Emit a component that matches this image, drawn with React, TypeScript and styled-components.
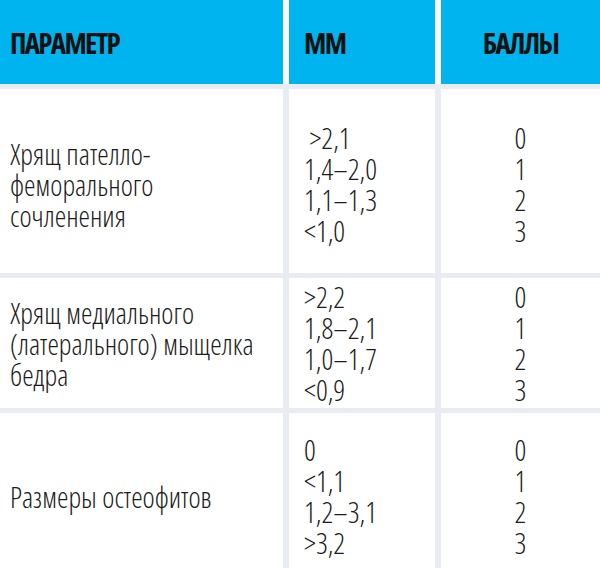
import React from "react";
import styled, { createGlobalStyle } from "styled-components";

const GlobalStyle = createGlobalStyle`
  html, body {
    margin: 0;
    padding: 0;
    background: #ffffff;
    overflow: hidden;
  }
  body {
    font-family: "Open Sans", "DejaVu Sans Condensed", sans-serif;
  }
`;

const COLS = "283px 146px 1fr";

const Page = styled.div`
  width: 600px;
  height: 568px;
  overflow: hidden;
  display: flex;
  flex-direction: column;
`;

const HeaderRow = styled.div`
  display: grid;
  grid-template-columns: ${COLS};
  column-gap: 6px;
  height: 84px;
  background: #ffffff;
  flex: none;
`;

const HeadCell = styled.div<{ $center?: boolean }>`
  background: #00b5ef;
  display: flex;
  align-items: center;
  justify-content: ${(p) => (p.$center ? "center" : "flex-start")};
  padding: 0 ${(p) => (p.$center ? "0" : "15px")};
  font-family: "Open Sans", sans-serif;
  font-stretch: 75%;
  font-weight: 750;
  font-size: 29px;
  letter-spacing: -1.7px;
  color: #111111;
  &:first-child {
    padding-left: 10px;
  }
`;

const Body = styled.div`
  display: grid;
  grid-template-columns: ${COLS};
  column-gap: 6px;
  row-gap: 5px;
  padding-top: 5px;
  background: #e9ecf3;
  flex: none;
`;

const Cell = styled.div<{ $h: number; $shift: number; $center?: boolean; $padLeft: number }>`
  background: #ffffff;
  height: ${(p) => p.$h}px;
  box-sizing: border-box;
  padding-top: ${(p) => p.$shift}px;
  padding-left: ${(p) => p.$padLeft}px;
  display: flex;
  flex-direction: column;
  justify-content: center;
  align-items: ${(p) => (p.$center ? "center" : "flex-start")};
  font-family: "Open Sans", sans-serif;
  font-stretch: 75%;
  font-weight: 300;
  font-size: 29px;
  line-height: 31px;
  color: #1c1c1c;
`;

const Line = styled.div`
  white-space: pre;
`;

type Row = {
  param: string[];
  mm: string[];
  score: string[];
  h: number;
  shift: number;
};

const rows: Row[] = [
  {
    param: ["Хрящ пателло-", "феморального", "сочленения"],
    mm: [" >2,1", "1,4–2,0", "1,1–1,3", "<1,0"],
    score: ["0", "1", "2", "3"],
    h: 184,
    shift: 6,
  },
  {
    param: ["Хрящ медиального", "(латерального) мыщелка", "бедра"],
    mm: [">2,2", "1,8–2,1", "1,0–1,7", "<0,9"],
    score: ["0", "1", "2", "3"],
    h: 130,
    shift: 0,
  },
  {
    param: ["Размеры остеофитов"],
    mm: ["0", "<1,1", "1,2–3,1", ">3,2"],
    score: ["0", "1", "2", "3"],
    h: 166,
    shift: 0,
  },
];

export default function App() {
  return (
    <>
      <GlobalStyle />
      <Page>
        <HeaderRow>
          <HeadCell>ПАРАМЕТР</HeadCell>
          <HeadCell>ММ</HeadCell>
          <HeadCell $center>БАЛЛЫ</HeadCell>
        </HeaderRow>
        <Body>
          {rows.map((r, i) => (
            <React.Fragment key={i}>
              <Cell $h={r.h} $shift={r.shift} $padLeft={10}>
                {r.param.map((t) => (
                  <Line key={t}>{t}</Line>
                ))}
              </Cell>
              <Cell $h={r.h} $shift={r.shift} $padLeft={15}>
                {r.mm.map((t) => (
                  <Line key={t}>{t}</Line>
                ))}
              </Cell>
              <Cell $h={r.h} $shift={r.shift} $padLeft={0} $center>
                {r.score.map((t) => (
                  <Line key={t}>{t}</Line>
                ))}
              </Cell>
            </React.Fragment>
          ))}
        </Body>
      </Page>
    </>
  );
}
